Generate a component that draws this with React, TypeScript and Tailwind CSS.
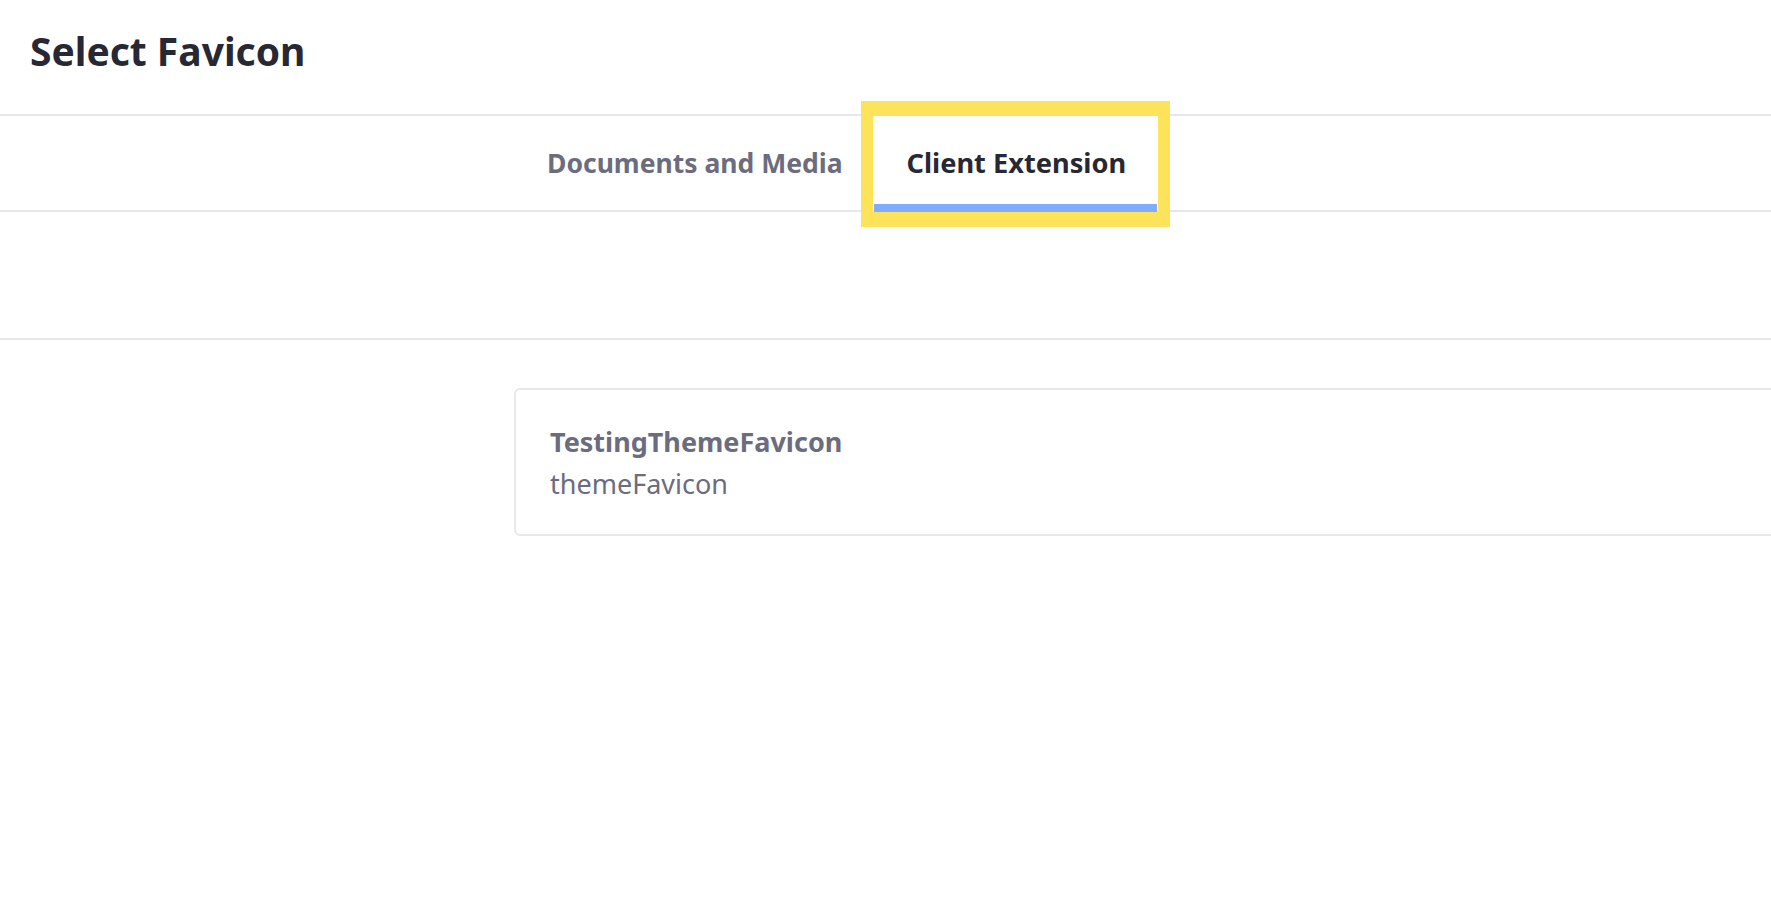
export default function App() {
  return (
    <div
      className="min-h-screen bg-white text-[#272833]"
      style={{ fontFamily: '"Noto Sans", "Open Sans", sans-serif' }}
    >
      {/* Header */}
      <div className="h-[116px] bg-white pl-[30px] pt-[27px] border-b-2 border-[#e7e7ed]">
        <h1 className="text-[39px] font-bold leading-[48px] text-[#272833]">
          Select Favicon
        </h1>
      </div>

      {/* Tabs */}
      <div className="h-[96px] bg-white border-b-2 border-[#e7e7ed] pl-[514px]">
        <div className="flex h-[94px]">
          <button className="flex h-[94px] items-end pl-[33px] pr-[31px] pb-[26px] text-[26.5px] font-bold text-[#6b6c7e]">
            Documents and Media
          </button>
          <div className="relative h-[94px]">
            <button className="relative flex h-[94px] items-end px-[33px] pb-[26px] text-[27.2px] font-bold text-[#272833]">
              Client Extension
              <span className="absolute bottom-[-2px] left-0 right-[2px] h-[8px] bg-[#80acff]" />
            </button>
            <span className="pointer-events-none absolute left-[-13px] right-[-11px] top-[-15px] bottom-[-17px] border-x-[12px] border-t-[15px] border-b-[15px] border-[#fde35a]" />
          </div>
        </div>
      </div>

      {/* Toolbar */}
      <div className="h-[128px] border-b-2 border-[#e7e7ed]" />

      {/* Content */}
      <div className="pl-[514px] pt-[48px]">
        <div className="h-[148px] w-[1300px] rounded-l-md border-2 border-[#e7e7ed] bg-white pl-[34px] pt-[31px]">
          <div className="text-[27px] font-bold leading-[42px] text-[#6b6c7e]">
            TestingThemeFavicon
          </div>
          <div className="text-[27px] leading-[42px] text-[#6b6c7e]">
            themeFavicon
          </div>
        </div>
      </div>
    </div>
  );
}
